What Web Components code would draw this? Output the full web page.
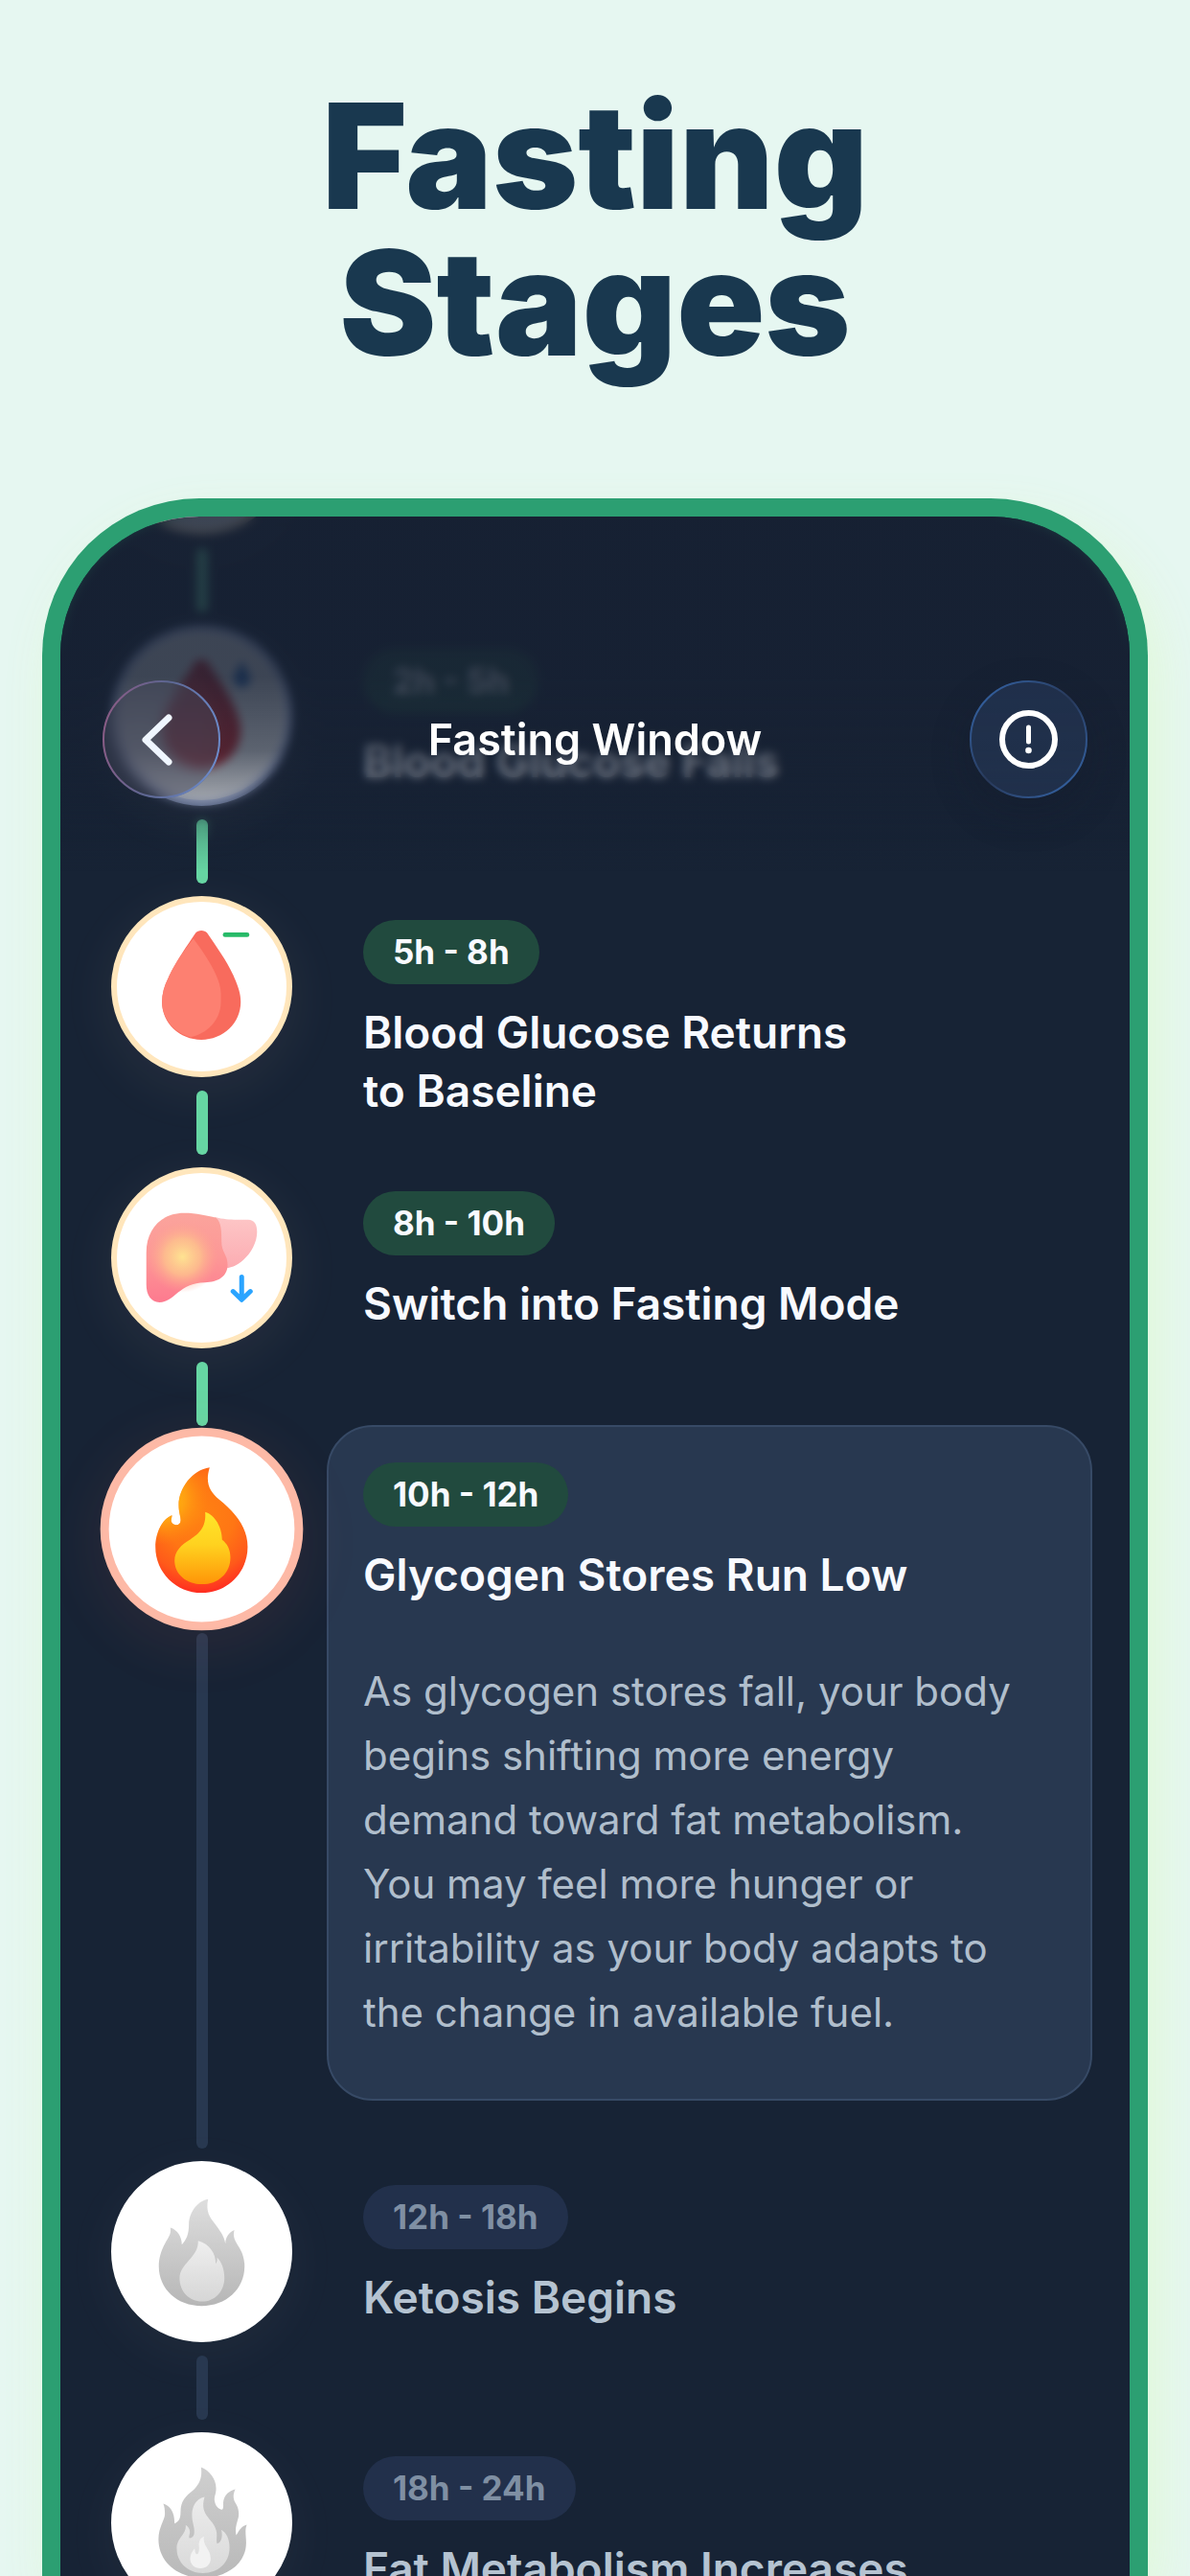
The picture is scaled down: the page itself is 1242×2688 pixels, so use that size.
<!DOCTYPE html>
<html lang="en">
<head>
<meta charset="utf-8">
<meta name="viewport" content="width=device-width, initial-scale=1">
<title>Fasting Stages</title>
<style>
  body {
    margin: 0;
    background: #e6f7f1;
    font-family: Inter, "Liberation Sans", sans-serif;
  }
</style>
</head>
<body>
<promo-page>
  <span slot="headline">Fasting<br>Stages</span>
  <phone-frame>
    <nav-header slot="header">Fasting Window</nav-header>
    <stage-item state="done" icon="drop"></stage-item>
    <stage-item state="passed" icon="drop-falls" hours="2h - 5h">Blood Glucose Falls</stage-item>
    <stage-item state="done" icon="drop" hours="5h - 8h">Blood Glucose Returns<br>to Baseline</stage-item>
    <stage-item state="done" icon="liver" hours="8h - 10h">Switch into Fasting Mode</stage-item>
    <stage-item state="active" icon="fire" hours="10h - 12h">
      Glycogen Stores Run Low
      <p slot="details">As glycogen stores fall, your body begins shifting more energy demand toward fat metabolism. You may feel more hunger or irritability as your body adapts to the change in available fuel.</p>
    </stage-item>
    <stage-item state="future" icon="ketosis" hours="12h - 18h">Ketosis Begins</stage-item>
    <stage-item state="future" icon="fat" hours="18h - 24h">Fat Metabolism Increases</stage-item>
  </phone-frame>
</promo-page>

<script>
const DROP = 'M341 160C348 150 370 150 377 160C405 202 440 248 462 300C475 330 482 350 482 376C482 442 427 494 359 494C291 494 236 442 236 376C236 350 243 325 256 300C278 250 312 204 341 160Z';
const DROP_LIGHT = 'M334 178C362 215 420 295 420 350V375C420 435 375 475 325 486C275 473 236 428 236 376C236 350 243 325 256 300C274 258 305 216 334 178Z';
const FLAME = 'M385 183C330 190 288 250 288 300C288 325 294 335 294 348C294 358 288 363 280 363C270 363 262 355 265 345L267 333C235 345 215 390 215 432C215 512 280 576 360 576C440 576 504 512 504 432C504 370 465 325 415 284C385 258 370 232 385 183Z';

const ICONS = {
  'drop': `
    <svg viewBox="95 63 530 530" aria-hidden="true">
      <path d="${DROP}" fill="#f86b5d"/>
      <path d="${DROP_LIGHT}" fill="#fd8071"/>
      <path d="M433 166H502" stroke="#27ba68" stroke-width="14" stroke-linecap="round"/>
    </svg>`,
  'drop-falls': `
    <svg viewBox="95 63 530 530" aria-hidden="true">
      <path d="${DROP}" fill="#d8262b"/>
      <path d="${DROP_LIGHT}" fill="#e5383a"/>
      <path d="M486 158C496 180 512 196 512 214A26 26 0 0 1 460 214C460 196 476 180 486 158Z" fill="#2d6fc4"/>
    </svg>`,
  'liver': `
    <svg viewBox="95 71 530 530" aria-hidden="true">
      <defs>
        <linearGradient id="body" x1="0" y1="0" x2="0" y2="1">
          <stop offset="0" stop-color="#fba49c"/><stop offset=".5" stop-color="#fd9796"/><stop offset="1" stop-color="#fd7a8f"/>
        </linearGradient>
        <radialGradient id="spot" gradientUnits="userSpaceOnUse" cx="300" cy="333" r="112">
          <stop offset="0" stop-color="#fee391"/><stop offset=".5" stop-color="#fdc38c" stop-opacity=".8"/><stop offset="1" stop-color="#fda08f" stop-opacity="0"/>
        </radialGradient>
        <linearGradient id="lobe" x1="0" y1="0" x2="0" y2="1">
          <stop offset="0" stop-color="#fdc6c6"/><stop offset="1" stop-color="#fcacb2"/>
        </linearGradient>
      </defs>
      <path d="M400 209C430 216 445 217 470 217H505C525 217 533 232 533 255C533 310 480 367 436 368Z" fill="url(#lobe)"/>
      <path d="M187 320C187 245 235 196 305 196C345 196 375 204 405 211C422 225 422 255 422 285C422 320 441 325 441 358C441 395 410 413 370 413C290 413 275 475 228 475C202 475 187 452 187 420Z" fill="url(#body)"/>
      <circle cx="300" cy="333" r="112" fill="url(#spot)"/>
      <path d="M485 396V465M458 441L485 467L512 441" fill="none" stroke="#2aa4ff" stroke-width="15" stroke-linecap="round" stroke-linejoin="round"/>
    </svg>`,
  'fire': `
    <svg viewBox="69 85 582 582" aria-hidden="true">
      <defs>
        <radialGradient id="flame" gradientUnits="userSpaceOnUse" cx="350" cy="330" r="250">
          <stop offset="0" stop-color="#ff8212"/><stop offset=".45" stop-color="#ff7614"/><stop offset=".75" stop-color="#ff5a1a"/><stop offset="1" stop-color="#ff2a22"/>
        </radialGradient>
        <radialGradient id="edge" gradientUnits="userSpaceOnUse" cx="235" cy="280" r="145">
          <stop offset="0" stop-color="#ffc810"/><stop offset=".5" stop-color="#ffb010" stop-opacity=".7"/><stop offset="1" stop-color="#ff9010" stop-opacity="0"/>
        </radialGradient>
        <linearGradient id="core" x1="0" y1="0" x2="0" y2="1">
          <stop offset="0" stop-color="#ffe62a"/><stop offset=".45" stop-color="#ffd21f"/><stop offset="1" stop-color="#ff9508"/>
        </linearGradient>
      </defs>
      <path d="${FLAME}" fill="url(#flame)"/>
      <path d="${FLAME}" fill="url(#edge)"/>
      <path d="M371 323C402 332 424 372 424 410C440 422 450 440 450 465C450 514 412 549 361 549C312 549 275 517 275 475C275 445 295 426 325 408C350 392 375 372 371 323Z" fill="url(#core)"/>
    </svg>`,
  'ketosis': `
    <svg viewBox="95 65 530 530" aria-hidden="true">
      <defs>
        <linearGradient id="flame" x1="0" y1="0" x2="0" y2="1"><stop offset="0" stop-color="#dedede"/><stop offset="1" stop-color="#b6b6b6"/></linearGradient>
        <linearGradient id="core" x1="0" y1="0" x2="0" y2="1"><stop offset="0" stop-color="#efefef"/><stop offset="1" stop-color="#d6d6d6"/></linearGradient>
      </defs>
      <path d="M380 166C345 172 320 210 320 245C320 275 312 295 298 308C298 285 285 262 262 255C266 275 255 287 245 305C233 328 226 350 226 376C226 448 284 500 360 500C436 500 494 448 494 376C494 350 486 330 474 312C460 290 458 280 462 263C445 270 435 285 434 305C430 280 415 262 402 244C385 222 372 205 380 166Z" fill="url(#flame)"/>
      <path d="M349 296C385 306 404 335 404 368C408 362 409 357 408 348C422 362 431 385 431 412C431 455 400 486 361 486C322 486 291 455 291 414C291 365 350 350 349 296Z" fill="url(#core)"/>
    </svg>`,
  'fat': `
    <svg viewBox="95 913 530 530" aria-hidden="true">
      <defs>
        <linearGradient id="flame" x1="0" y1="0" x2="0" y2="1"><stop offset="0" stop-color="#cfcfcf"/><stop offset="1" stop-color="#b9b9b9"/></linearGradient>
        <linearGradient id="core" x1="0" y1="0" x2="0" y2="1"><stop offset="0" stop-color="#ececec"/><stop offset="1" stop-color="#d9d9d9"/></linearGradient>
      </defs>
      <path d="M358 1004C385 1015 405 1040 405 1070C405 1088 399 1095 400 1108C402 1125 412 1136 424 1137C430 1130 426 1120 428 1110C432 1090 445 1078 465 1073C455 1095 460 1108 468 1120C475 1132 477 1145 475 1160C470 1180 463 1195 468 1217C475 1208 480 1190 501 1184C494 1200 499 1220 499 1240C499 1305 440 1350 362 1350C284 1350 225 1300 225 1230C225 1190 245 1170 245 1150C245 1138 244 1128 240 1118C262 1125 276 1145 275 1180C288 1175 294 1165 294 1145C294 1110 310 1095 335 1075C355 1055 362 1035 358 1004Z" fill="url(#flame)"/>
      <path d="M369 1097C340 1103 328 1130 330 1160C331 1180 340 1195 336 1215C333 1223 328 1226 322 1226C318 1222 324 1212 323 1205C322 1196 317 1190 310 1185C313 1215 282 1225 282 1258C282 1303 318 1335 364 1335C412 1335 447 1303 447 1255C447 1230 438 1210 421 1200C426 1215 424 1240 408 1243C405 1235 408 1222 407 1210C403 1165 350 1160 369 1097Z" fill="url(#core)"/>
      <path d="M367 1221C352 1228 350 1240 352 1255C352 1268 350 1276 344 1276C338 1272 340 1265 338 1258C330 1268 324 1278 324 1290C324 1308 338 1320 356 1320C374 1320 388 1308 388 1290C388 1260 362 1250 367 1221Z" fill="#f2f2f2"/>
    </svg>`,
};

class PromoPage extends HTMLElement {
  constructor() {
    super();
    this.attachShadow({ mode: 'open' }).innerHTML = `
      <style>
        :host {
          display: flex;
          flex-direction: column;
          height: 100vh;
          overflow: hidden;
        }
        h1 {
          margin: 0;
          padding: 87px 0 127px;
          color: #19384f;
          font-size: 152px;
          font-weight: 900;
          line-height: 153px;
          text-align: center;
        }
      </style>
      <h1><slot name="headline"></slot></h1>
      <slot></slot>
    `;
  }
}

class PhoneFrame extends HTMLElement {
  constructor() {
    super();
    this.attachShadow({ mode: 'open' }).innerHTML = `
      <style>
        :host {
          position: relative;
          display: block;
          flex: 1;
          min-height: 0;
          margin: 0 44px;
          overflow: hidden;
          border: 19px solid #2c9f72;
          border-bottom: 0;
          border-radius: 164px 164px 0 0;
          background: #172335;
          box-shadow: 12px 24px 50px rgba(224, 248, 214, .9);
        }
        .list {
          margin-top: -170px;
          padding: 0 39px 0 53px;
        }
        /* frosted area under the header, fading out over the list */
        .haze, .veil {
          position: absolute;
          inset: 0 0 auto;
          height: 370px;
        }
        .haze {
          backdrop-filter: blur(5px);
          -webkit-mask-image: linear-gradient(#000 72%, transparent 92%);
          mask-image: linear-gradient(#000 72%, transparent 92%);
        }
        .veil {
          background: linear-gradient(rgba(23, 33, 51, .84) 45%, rgba(23, 33, 51, .7) 66%, rgba(23, 33, 51, .42) 79%, rgba(23, 33, 51, .2) 90%, rgba(23, 33, 51, 0));
        }
      </style>
      <div class="list"><slot></slot></div>
      <div class="haze"></div>
      <div class="veil"></div>
      <slot name="header"></slot>
    `;
  }
}

class NavHeader extends HTMLElement {
  constructor() {
    super();
    this.attachShadow({ mode: 'open' }).innerHTML = `
      <style>
        :host {
          position: absolute;
          inset: 0 0 auto;
          display: flex;
          align-items: center;
          justify-content: space-between;
          padding: 171px 44px 0;
          color: #fff;
        }
        h2 {
          margin: 0;
          font-size: 45px;
          font-weight: 600;
          line-height: 61px;
        }
        button {
          width: 123px;
          height: 123px;
          padding: 0;
          border: 0;
          border-radius: 50%;
          background: rgba(44, 66, 104, .45);
          box-shadow: 0 16px 40px rgba(20, 26, 44, .3);
          cursor: pointer;
        }
        .back {
          background: rgba(70, 74, 92, .45);
          box-shadow: none;
          backdrop-filter: blur(5px);
        }
        svg {
          display: block;
          width: 100%;
          height: 100%;
          fill: none;
        }
      </style>
      <button class="back" type="button" aria-label="Back">
        <svg viewBox="0 0 123 123">
          <linearGradient id="rim-warm" x1="0" y1=".4" x2="1" y2=".6">
            <stop offset="0" stop-color="#8a5c86"/><stop offset=".45" stop-color="#5d6691"/><stop offset="1" stop-color="#6c8bcb"/>
          </linearGradient>
          <circle cx="61.5" cy="61.5" r="60.5" stroke="url(#rim-warm)" stroke-width="2"/>
          <path d="M69 39L45 62L69 85" stroke="#f0f6ff" stroke-width="7" stroke-linecap="round" stroke-linejoin="round"/>
        </svg>
      </button>
      <h2><slot></slot></h2>
      <button type="button" aria-label="Information">
        <svg viewBox="0 0 123 123">
          <linearGradient id="rim-cool" x1="0" y1="0" x2="1" y2="1">
            <stop offset=".1" stop-color="#33609f"/><stop offset=".5" stop-color="#28395a"/><stop offset=".9" stop-color="#33609f"/>
          </linearGradient>
          <circle cx="61.5" cy="61.5" r="60.5" stroke="url(#rim-cool)" stroke-width="2"/>
          <circle cx="61.5" cy="61.5" r="27.5" stroke="#fff" stroke-width="6"/>
          <path d="M61.5 49V64" stroke="#fff" stroke-width="5" stroke-linecap="round"/>
          <circle cx="61.5" cy="73" r="3.3" fill="#fff"/>
        </svg>
      </button>
    `;
  }
}

class StageItem extends HTMLElement {
  connectedCallback() {
    this.attachShadow({ mode: 'open' });
    this.render();
  }

  render() {
    const hours = this.getAttribute('hours');
    this.shadowRoot.innerHTML = `
      <style>
        :host {
          --ring: #ffe6bc;
          --glow: rgba(255, 225, 205, .06);
          --line: #66d6a3;
          --pill: #214a3e;
          --pill-text: #f8faff;
          --title: #f8faff;
          display: grid;
          grid-template-columns: 189px 1fr;
          gap: 36px;
        }
        :host([state="passed"]) {
          --ring: #b4c4f4;
        }
        :host([state="active"]) {
          --ring: #fdb9a6;
          --glow: rgba(255, 120, 100, .08);
          --line: #283850;
        }
        :host([state="future"]) {
          --ring: #fff;
          --glow: rgba(255, 230, 220, .04);
          --line: #283850;
          --pill: #22304b;
          --pill-text: #7f8fa3;
          --title: #b5c3d1;
        }
        .rail {
          display: flex;
          flex-direction: column;
          align-items: center;
        }
        .marker {
          box-sizing: border-box;
          width: 189px;
          height: 189px;
          border: 6px solid var(--ring);
          border-radius: 50%;
          background: #fff;
          box-shadow: 0 12px 54px 6px var(--glow);
        }
        :host([state="active"]) .marker {
          border-width: 8px;
          transform: scale(1.12);
        }
        .marker svg {
          display: block;
          width: 100%;
          height: 100%;
        }
        .line {
          flex: 1;
          width: 12px;
          min-height: 67px;
          margin: 14px 0 13px;
          border-radius: 6px;
          background: var(--line);
        }
        .content {
          margin-top: -14px;
          padding: 37px 36px 0;
          border: 2px solid transparent;
          border-radius: 48px;
        }
        :host([state="active"]) .content {
          margin-bottom: 63px;
          padding-bottom: 57px;
          border-color: #374a66;
          background: #283850;
        }
        .hours {
          display: inline-block;
          padding: 0 31px;
          border-radius: 34px;
          background: var(--pill);
          color: var(--pill-text);
          font-size: 35px;
          font-weight: 700;
          line-height: 67px;
          vertical-align: top;
        }
        h3 {
          margin: 20px 0 0;
          color: var(--title);
          font-size: 46px;
          font-weight: 600;
          line-height: 61px;
        }
        ::slotted(p) {
          margin: 57px 0 0;
          padding-right: 24px;
          color: #b0becc;
          font-size: 42px;
          line-height: 67px;
        }
      </style>
      <div class="rail">
        <div class="marker">${ICONS[this.getAttribute('icon')]}</div>
        <div class="line"></div>
      </div>
      ${hours ? `
      <div class="content">
        <span class="hours">${hours}</span>
        <h3><slot></slot></h3>
        <slot name="details"></slot>
      </div>` : ''}
    `;
  }
}

customElements.define('promo-page', PromoPage);
customElements.define('phone-frame', PhoneFrame);
customElements.define('nav-header', NavHeader);
customElements.define('stage-item', StageItem);
</script>
</body>
</html>
